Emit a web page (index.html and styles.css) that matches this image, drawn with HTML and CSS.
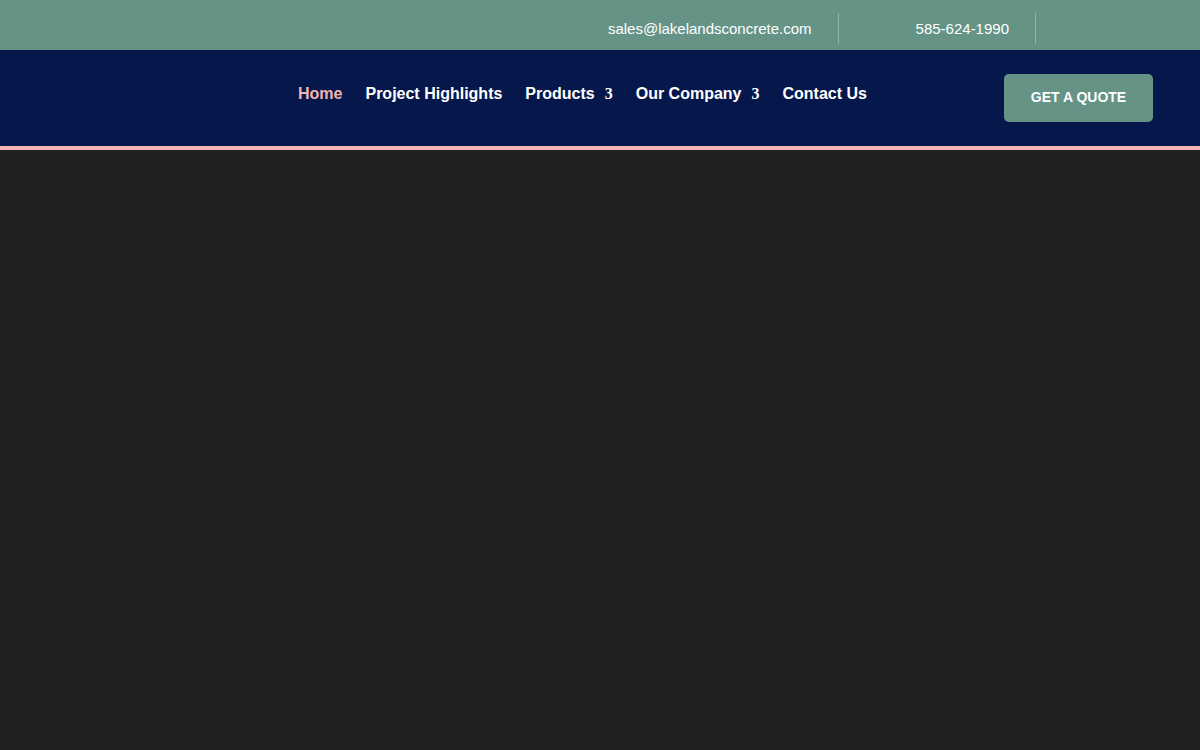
FILE: index.html
```html
<!DOCTYPE html>
<html>
<head>
<meta charset="utf-8">
<link rel="stylesheet" href="styles.css">
</head>
<body>
<div class="topbar">
  <div class="top-item email">sales@lakelandsconcrete.com</div>
  <div class="top-item phone">585-624-1990</div>
</div>
<header class="nav">
  <ul class="menu">
    <li class="active">Home</li>
    <li>Project Highlights</li>
    <li>Products<span class="arrow">3</span></li>
    <li>Our Company<span class="arrow">3</span></li>
    <li>Contact Us</li>
  </ul>
  <a class="quote">GET A QUOTE</a>
</header>
<main class="body"></main>
</body>
</html>
```
FILE: styles.css
```css
html, body {
  margin: 0;
  padding: 0;
  background: #212121;
  font-family: "Liberation Sans", Arial, sans-serif;
}
.topbar {
  height: 50px;
  box-sizing: border-box;
  padding-top: 6px;
  background: #659487;
  display: flex;
  justify-content: flex-end;
  align-items: center;
  padding-right: 164px;
  color: #ffffff;
  font-size: 15px;
}
.top-item {
  height: 31px;
  line-height: 31px;
  border-right: 1px solid rgba(255,255,255,0.3);
  padding-right: 26px;
}
.email { padding-left: 0; }
.phone { padding-left: 77px; }
.nav {
  height: 96px;
  background: #06174b;
  border-bottom: 4px solid #f0b5b2;
  display: flex;
  align-items: center;
  position: relative;
}
.menu {
  list-style: none;
  margin: 0;
  padding: 0 0 8px 298px;
  display: flex;
  gap: 23px;
  flex: 1;
}
.menu li {
  color: #ffffff;
  font-weight: bold;
  font-size: 16px;
  line-height: 20px;
  white-space: nowrap;
}
.menu li.active { color: #f0b5b2; }
.arrow {
  font-family: "Liberation Serif", "Times New Roman", serif;
  font-weight: bold;
  margin-left: 10px;
}
.quote {
  display: flex;
  align-items: center;
  justify-content: center;
  box-sizing: border-box;
  padding-bottom: 2px;
  width: 149px;
  height: 48px;
  margin-right: 47px;
  background: #659487;
  border-radius: 5px;
  color: #ffffff;
  font-weight: bold;
  font-size: 14px;
}
.body {
  height: 600px;
}
```
